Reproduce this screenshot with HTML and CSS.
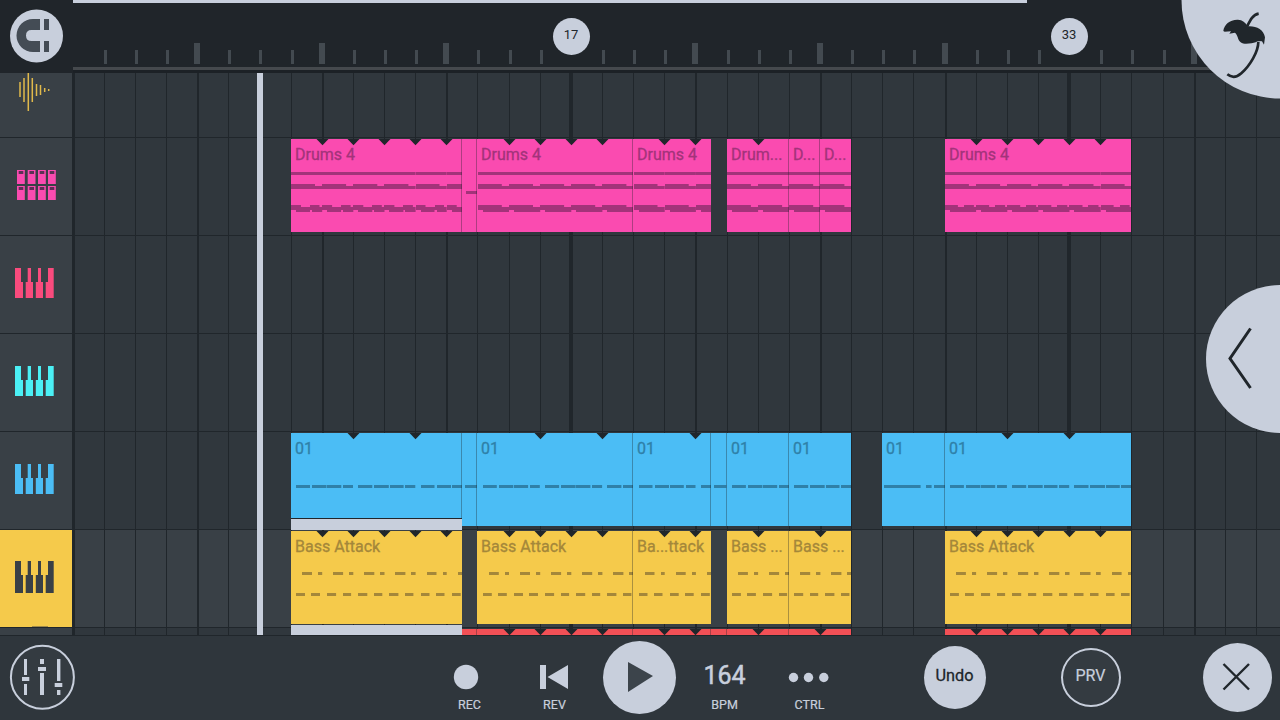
FILE: index.html
```html
<!DOCTYPE html>
<html lang="en">
<head>
<meta charset="utf-8">
<title>Playlist</title>
<link rel="stylesheet" href="styles.css">
</head>
<body>
<div class="app">
  <header class="top">
    <button class="magnet" aria-label="Snap">
      <svg width="54" height="54" viewBox="10 9 54 54"><circle cx="36.500" cy="36" r="26.500" fill="#c8cfdc"/><path d="M40 19H33A16.5 16.5 0 0 0 33 52H40V41H31.5Q26 41 26 35.5T31.500 30H40ZM44 19h5v11h-5zM44 41h5v11h-5z" fill="#444c55"/></svg>
    </button>
    <svg class="ruler" id="ruler" width="1207" height="73" viewBox="73 0 1207 73"></svg>
  </header>
  <main class="playlist">
    <aside class="tracks">
      <div class="track short"><svg width="72" height="64" viewBox="0 73 72 64"><path d="M20 82v15M24 78v24M28.300 73v38M32.300 78v24M36.500 84v12M40.500 85v10M44.700 88v4M48.700 89v2" stroke="#e0b94b" stroke-width="1.500"/></svg></div>
      <div class="track"><svg width="72" height="97" viewBox="0 138 72 97"><g id="pads" fill="#fa4bb0"></g></svg></div>
      <div class="track keys rose"></div>
      <div class="track keys cyan"></div>
      <div class="track keys sky"></div>
      <div class="track keys selected"></div>
      <div class="track rest"></div>
    </aside>
    <section class="lanes" id="lanes"></section>
    <svg class="grid" id="grid" width="1208" height="563" viewBox="72 73 1208 563"></svg>
    <div class="playhead"></div>
  </main>
  <footer class="bar">
    <button class="mixer" aria-label="Mixer"><svg width="67" height="67" viewBox="9 644 67 67"><circle cx="42.400" cy="677.300" r="31.500" fill="#343b41" stroke="#c8cfdc" stroke-width="2"/><path fill="#c8cfdc" d="M24 659h3v16h-3zM22 677h7.300v4H22zM24 684h3v11h-3zM40 659h4v5h-4zM38 667h8v4h-8zM40 673h4v22h-4zM57 659h3.400v22H57zM54.700 683h7.600v4h-7.600zM57 690h3.400v5H57z"/></svg></button>
    <button class="tool rec"><svg width="26" height="26"><circle cx="9" cy="14" r="12.200" fill="#c8cfdc"/></svg><span>REC</span></button>
    <button class="tool rev"><svg width="30" height="26"><path d="M0 2h6v24h-6zM7.500 14L28 2v24z" fill="#c8cfdc"/></svg><span>REV</span></button>
    <button class="play" aria-label="Play"><svg width="73" height="73"><path d="M25 21L50 35L25 51z" fill="#3c444b"/></svg></button>
    <button class="tool bpm"><b>164</b><span>BPM</span></button>
    <button class="tool ctrl"><svg width="44" height="26"><g fill="#c8cfdc"><circle cx="5.500" cy="14.500" r="4.700"/><circle cx="20.500" cy="14.500" r="4.700"/><circle cx="35.800" cy="14.500" r="4.700"/></g></svg><span>CTRL</span></button>
    <button class="undo">Undo</button>
    <button class="prv">PRV</button>
    <button class="close" aria-label="Close"><svg width="69" height="69"><path d="M20.500 21L46 46.500M46 21L20.500 46.500" stroke="#20262b" stroke-width="2.400"/></svg></button>
  </footer>
  <svg class="logo" width="98" height="98" viewBox="0 0 98 98"><path d="M-.5 0A98.500 98.500 0 0 0 98 98.500V0z" fill="#c8cfdc"/>
    <g transform="translate(-252 0) scale(.33333)"><path d="M880 93C882 74 900 58 924 59C937 60 947 67 953 79C978 77 1001 88 1005 112L1002 134L996 124L984 123L977 127C967 129 944 136 932 127C923 119 924 106 915 98L898 101L903 94L884 95Z" fill="#20262b"/><path d="M951 80C960 62 968 44 986 41M985 125C985 155 960 197 934 220C917 235 903 232 892 223" fill="none" stroke="#20262b" stroke-width="8"/></g></svg>
  <button class="drawer" aria-label="Open panel"><svg width="74" height="148"><path d="M44.500 43.500L24 73.500L44.500 103" fill="none" stroke="#20262b" stroke-width="3"/></svg></button>
</div>
<script src="app.js"></script>
</body>
</html>
```
FILE: styles.css
```css
* { box-sizing: border-box; }
body { margin: 0; background: #2f363c; font-family: Roboto, "Liberation Sans", sans-serif; }
button { border: 0; padding: 0; background: none; font: inherit; color: inherit; }
svg { display: block; flex: none; overflow: visible; }
.app { position: relative; width: 1280px; height: 720px; overflow: hidden; display: flex; flex-direction: column; color: #c8cfdc; }

.top { height: 73px; flex: none; display: flex; background: #20252a; }
.magnet { width: 73px; height: 73px; padding: 9px 0 0 10px; display: flex; align-items: flex-start; }
.ruler text { font-size: 13px; text-anchor: middle; fill: #20262b; }

.playlist { position: relative; height: 563px; flex: none; display: flex; overflow: hidden; border-bottom: 1px solid #20262b; }
.tracks { width: 72px; flex: none; background: #20262b; }
.track { height: 97px; margin-bottom: 1px; background: #394046; }
.track.short { height: 64px; overflow: hidden; }
.track.rest { height: 7px; }
.rose { color: #fa4b7d; }
.cyan { color: #4bf0f5; }
.sky { color: #4bbdf5; }
.track.selected { background: #f5ca4b; color: #394046; }

.lanes { width: 1208px; flex: none; display: flex; flex-direction: column; background: #30373d; }
.lane { height: 98px; flex: none; display: flex; padding: 2px 0 0 1px; }
.lane.short { height: 64px; }
.lane.active { background: #394046; }
.lane.last { height: 8px; }
.clip { position: relative; z-index: 2; height: 93px; flex: none; overflow: hidden; padding: 7px 0 0 4px; font-size: 16px; line-height: 18px; white-space: pre; -webkit-text-stroke: .3px currentColor; }
.clip svg { position: absolute; left: 0; top: 0; }
.lane.last .clip { height: 6px; }
.drums { background: #fa4bb0; color: #a3337a; }
.lead { background: #4bbdf5; color: #2f80a8; }
.bass { background: #f5ca4b; color: #a4873a; }
.red { background: #f25056; color: #a23a40; }
.clip.cut { height: 97px; border-bottom: 11px solid #c8cfdc; }
.lane.last .clip.tail { height: 10px; margin-top: -4px; background: #c8cfdc; }

.grid { position: absolute; left: 72px; top: 0; z-index: 1; }
.playhead { position: absolute; left: 257px; top: 0; width: 6px; height: 562px; z-index: 3; background: #c8cfdc; }

.bar { height: 84px; flex: none; display: flex; align-items: flex-start; background: #2f363c; }
.mixer { margin: 8px 0 0 9px; width: 67px; height: 67px; }
.tool { display: flex; flex-direction: column; align-items: center; width: 50px; height: 80px; padding-top: 27px; font-size: 12.5px; line-height: 16px; -webkit-text-stroke: .2px currentColor; }
.tool span { margin-top: auto; margin-bottom: 3px; }
.tool b { font-size: 25px; font-weight: 400; line-height: 26px; -webkit-text-stroke: .5px currentColor; }
.rec { margin-left: 368.5px; }
.rev { margin-left: 35px; }
.play { margin: 5px 0 0 23.5px; width: 73px; height: 73px; border-radius: 50%; background: #c8cfdc; }
.bpm { margin-left: 23.5px; }
.ctrl { margin-left: 35px; }
.undo { margin: 10px 0 0 89px; width: 62px; height: 63px; padding-bottom: 4px; border-radius: 50%; background: #c8cfdc; color: #20262b; font-size: 16.3px; -webkit-text-stroke: .3px #20262b; }
.prv { margin: 12px 0 0 75px; width: 60px; height: 59px; padding-bottom: 4px; border-radius: 50%; border: 2px solid #c8cfdc; background: #343b41; font-size: 16px; -webkit-text-stroke: .2px currentColor; }
.close { margin: 7px 0 0 82px; width: 69px; height: 69px; border-radius: 50%; background: #c8cfdc; }

.logo { position: absolute; right: 0; top: 0; z-index: 4; }
.drawer { position: absolute; right: 0; top: 285px; z-index: 4; width: 74px; height: 148px; border-radius: 74px 0 0 74px; background: #c8cfdc; }
```
FILE: app.js
```js
const ORIGIN = 73, BAR = 31.14;
const barX = n => ORIGIN + n * BAR;
const pixelX = n => Math.floor(barX(n) + 0.1);
const rect = (x, y, w, h, fill = '') => `<rect x="${x}" y="${y}" width="${w}" height="${h}"${fill && ` fill="${fill}"`}/>`;

// Ruler
let ruler = rect(73, 0, 954, 3, '#c8cfdc') + rect(73, 67, 1207, 3, '#45494d') + rect(73, 70, 1207, 3, '#1c2126');
for (let n = 1; n < 39; n++) {
  const x = pixelX(n);
  if (n % 16 === 0) {
    ruler += `<circle cx="${x + .5}" cy="36.5" r="18.5" fill="#c8cfdc"/><text x="${x}" y="39">${n + 1}</text>`;
  } else if (n % 4 === 0) ruler += rect(x - 3, 43, 6, 21, '#434a50');
  else ruler += rect(x, 50, 3, 14, '#434a50');
}
document.getElementById('ruler').innerHTML = ruler;

// Grid lines
let grid = rect(72, 73, 3, 563, '#20262b');
for (let n = 1; n < 39; n++) {
  const x = pixelX(n);
  grid += n % 16 === 0 ? rect(x - 2, 73, 4, 563, '#20262b')
    : n % 4 === 0 ? rect(x, 73, 2, 563, '#20262b') : rect(x, 73, 1, 563, '#20262b');
}
for (let y = 137; y < 636; y += 98) grid += rect(72, y, 1208, 1, '#20262b');
document.getElementById('grid').innerHTML = grid;

// Track icons
const keys = (top, h) => `<svg width="72" height="97" fill="currentColor">
  <path d="M15 ${top}h6v14h2v${h - 14}h-8zM27.700 ${top}h3.300v14h2v${h - 14}h-7.300v-${h - 14}h2zM38 ${top}h3v14h2v${h - 14}h-7.200v-${h - 14}H38zM48 ${top}h5.700v${h}h-8v-${h - 14}h2.300z"/></svg>`;
document.querySelectorAll('.keys').forEach(t => {
  const on = t.classList.contains('selected');
  t.innerHTML = keys(on ? 31 : 32, on ? 32 : 30);
});
document.querySelector('.selected svg').insertAdjacentHTML('beforeend', rect(32, 96, 16, 1, '#a08a4a'));
let pads = '';
for (const y of [170, 186]) for (const x of [17, 27.7, 38, 48])
  pads += rect(x, y, 7.8, 14) + rect(x + 1.7, y + 1, 4.600, 3, '#5d2f55');
document.getElementById('pads').innerHTML = pads;

// Note patterns: [start, end, top, height], repeated every `period` bars
const drumBase = [[0, 31.2, 33, 3], [0, 24, 45, 2], [0, 31.2, 47, 3], [0, 31.2, 68, 3]];
const patterns = {
  drumA: [1, [...drumBase, [0, 10, 66, 2], [19, 28.5, 66, 2], [5, 19, 71, 2], [21, 31.2, 71, 2]]],
  drumB: [1, [...drumBase, [0, 24, 66, 2], [5, 31.2, 71, 2]]],
  drumC: [1, [...drumBase, [0, 13, 66, 2], [19, 29, 66, 2], [5, 31.2, 71, 2]]],
  lead: [2, [[5, 19, 52, 3], [21, 35.5, 52, 3], [36.3, 50.3, 52, 3], [52, 62, 52, 3]]],
  bass: [1, [[11, 21, 41, 3], [27, 31.2, 41, 3], [5, 14, 62, 3], [20.5, 29, 62, 3]]],
  fill: [9, [[4, 15, 52, 3]]],
  leadFill: [9, [[3, 15, 52, 3]]],
  leadLong: [9, [[1, 38, 52, 3], [43, 49, 52, 3], [51, 63, 52, 3]]]
};

// Clip: [left, right, label, pattern, notch bars, extra class]
const lanes = [
  ['short', '', []],
  ['', 'drums', [
    [291, 462, 'Drums 4', 'drumA', [8, 9, 10, 11, 12], 'joined'], [462, 477, '', 'fill', [], 'joined'],
    [477, 633, 'Drums 4', 'drumB', [14, 15, 16, 17], 'joined'], [633, 711, 'Drums 4', 'drumB', [19, 20]],
    [727, 789, 'Drum...', 'drumB', [22], 'joined'], [789, 820, 'D...', 'drumB', [], 'joined'], [820, 851, 'D...', 'drumB', []],
    [945, 1131, 'Drums 4', 'drumC', [29, 30, 31, 32, 33]]]],
  ['', '', []],
  ['', '', []],
  ['', 'lead', [
    [291, 462, '01', 'lead', [9, 11], 'cut joined'], [462, 477, '', 'leadFill', [], 'joined'],
    [477, 633, '01', 'lead', [15, 17], 'joined'], [633, 711, '01', 'lead', [20], 'joined'], [711, 727, '', 'leadFill', [], 'joined'],
    [727, 789, '01', 'lead', [], 'joined'], [789, 851, '01', 'lead', []],
    [882, 945, '01', 'leadLong', [], 'joined'], [945, 1131, '01', 'lead', [30, 32]]]],
  ['active', 'bass', [
    [291, 462, 'Bass Attack', 'bass', [8, 9, 10, 11, 12]], [477, 633, 'Bass Attack', 'bass', [14, 15, 16, 17], 'joined'],
    [633, 711, 'Ba...ttack', 'bass', [19, 20]], [727, 789, 'Bass ...', 'bass', [22], 'joined'],
    [789, 851, 'Bass ...', 'bass', [24]], [945, 1131, 'Bass Attack', 'bass', [29, 30, 31, 32, 33]]]],
  ['last', 'red', [
    [291, 462, '', '', [], 'tail'], [462, 477, '', '', [], 'joined'], [477, 633, '', '', [14, 15, 16, 17], 'joined'],
    [633, 711, '', '', [19, 20], 'joined'], [711, 727, '', '', [], 'joined'], [727, 789, '', '', [22], 'joined'],
    [789, 851, '', '', [24]], [945, 1131, '', '', [29, 30, 31, 32, 33]]]]
];

function clipArt([x0, x1, , pattern, notches, extra = '']) {
  let art = '';
  if (pattern) {
    const [period, notes] = patterns[pattern];
    const start = barX(Math.round((x0 - ORIGIN) / BAR * 2) / 2);
    for (let off = 0; start + off < x1; off += period * BAR)
      for (const [a, b, y, h] of notes) {
        const left = Math.max(0, Math.round(start + off + a - x0));
        const right = Math.min(x1 - x0, start + off + b - x0);
        if (right > left) art += rect(left, y, (right - left).toFixed(1), h);
      }
  }
  for (const n of notches) {
    const x = pixelX(n) - x0;
    art += `<path d="M${x - 5.5} 0h12l-6 6.200z" fill="#20262b"/>`;
  }
  if (extra.includes('joined')) art += rect(x1 - x0 - 1, 0, 1, extra.includes('cut') ? 85 : 93, 'rgba(32,38,43,.35)');
  if (extra.includes('cut')) art += rect(0, 85, x1 - x0, 1, '#20262b');
  return `<svg width="${x1 - x0}" height="93" fill="currentColor">${art}</svg>`;
}

document.getElementById('lanes').innerHTML = lanes.map(([cls, color, clips]) => {
  let at = ORIGIN;
  return `<div class="lane ${cls}">` + clips.map(c => {
    const gap = c[0] - at;
    at = c[1];
    return `<div class="clip ${color} ${c[5] || ''}" style="width:${c[1] - c[0]}px;margin-left:${gap}px">${clipArt(c)}${c[2]}</div>`;
  }).join('') + '</div>';
}).join('');
```
